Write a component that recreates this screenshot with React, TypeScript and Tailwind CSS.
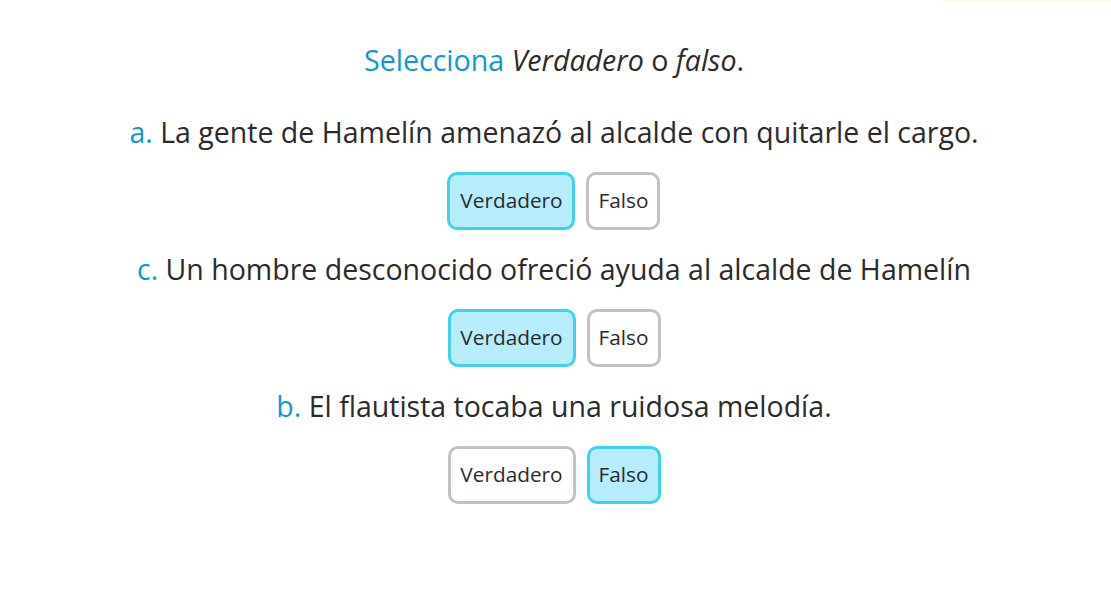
import React, { useState } from 'react';

type Item = { id: string; letter: string; text: string; answer: 'v' | 'f' };

const items: Item[] = [
  { id: 'a', letter: 'a.', text: 'La gente de Hamelín amenazó al alcalde con quitarle el cargo.', answer: 'v' },
  { id: 'c', letter: 'c.', text: 'Un hombre desconocido ofreció ayuda al alcalde de Hamelín', answer: 'v' },
  { id: 'b', letter: 'b.', text: 'El flautista tocaba una ruidosa melodía.', answer: 'f' },
];

function Choice({ label, active, wide, onClick }: { label: string; active: boolean; wide?: boolean; onClick: () => void }) {
  const size = wide ? 'w-[128px]' : 'w-[74px]';
  return (
    <button
      onClick={onClick}
      className={
        active
          ? `${size} h-[58px] rounded-[10px] border-[3px] border-[#3dd2f1] bg-[#b7ecfd] text-[20.8px] text-[#2b2b2b]`
          : `${size} h-[58px] rounded-[10px] border-[3px] border-[#c2c2c2] bg-white text-[20.8px] text-[#2b2b2b]`
      }
    >
      {label}
    </button>
  );
}

export default function App() {
  const [answers, setAnswers] = useState<Record<string, 'v' | 'f'>>(
    Object.fromEntries(items.map(i => [i.id, i.answer]))
  );

  return (
    <div className="w-[1111px] h-[605px] bg-white font-['Open_Sans',sans-serif] text-[#2b2b2b] flex flex-col items-center pt-[40px] pr-[3px]">
      <div className="h-[1px] w-[170px] bg-[#fdf3e3] self-end -mr-[3px] -mt-[40px] mb-[39px]" />
      <h1 className="text-[28.6px] leading-[40px] font-normal">
        <span className="text-[#0c97d7]">Selecciona</span> <em>Verdadero</em> o <em>falso</em>.
      </h1>
      {items.map((item, i) => (
        <div key={item.id} className={i === 0 ? 'flex flex-col items-center mt-[32px]' : 'flex flex-col items-center mt-[19px]'}>
          <p className="text-[28.5px] leading-[40px]">
            <span className="text-[#0c97d7]">{item.letter}</span> {item.text}
          </p>
          <div className="flex gap-[11px] mt-[20px]">
            <Choice label="Verdadero" wide active={answers[item.id] === 'v'} onClick={() => setAnswers({ ...answers, [item.id]: 'v' })} />
            <Choice label="Falso" active={answers[item.id] === 'f'} onClick={() => setAnswers({ ...answers, [item.id]: 'f' })} />
          </div>
        </div>
      ))}
    </div>
  );
}
